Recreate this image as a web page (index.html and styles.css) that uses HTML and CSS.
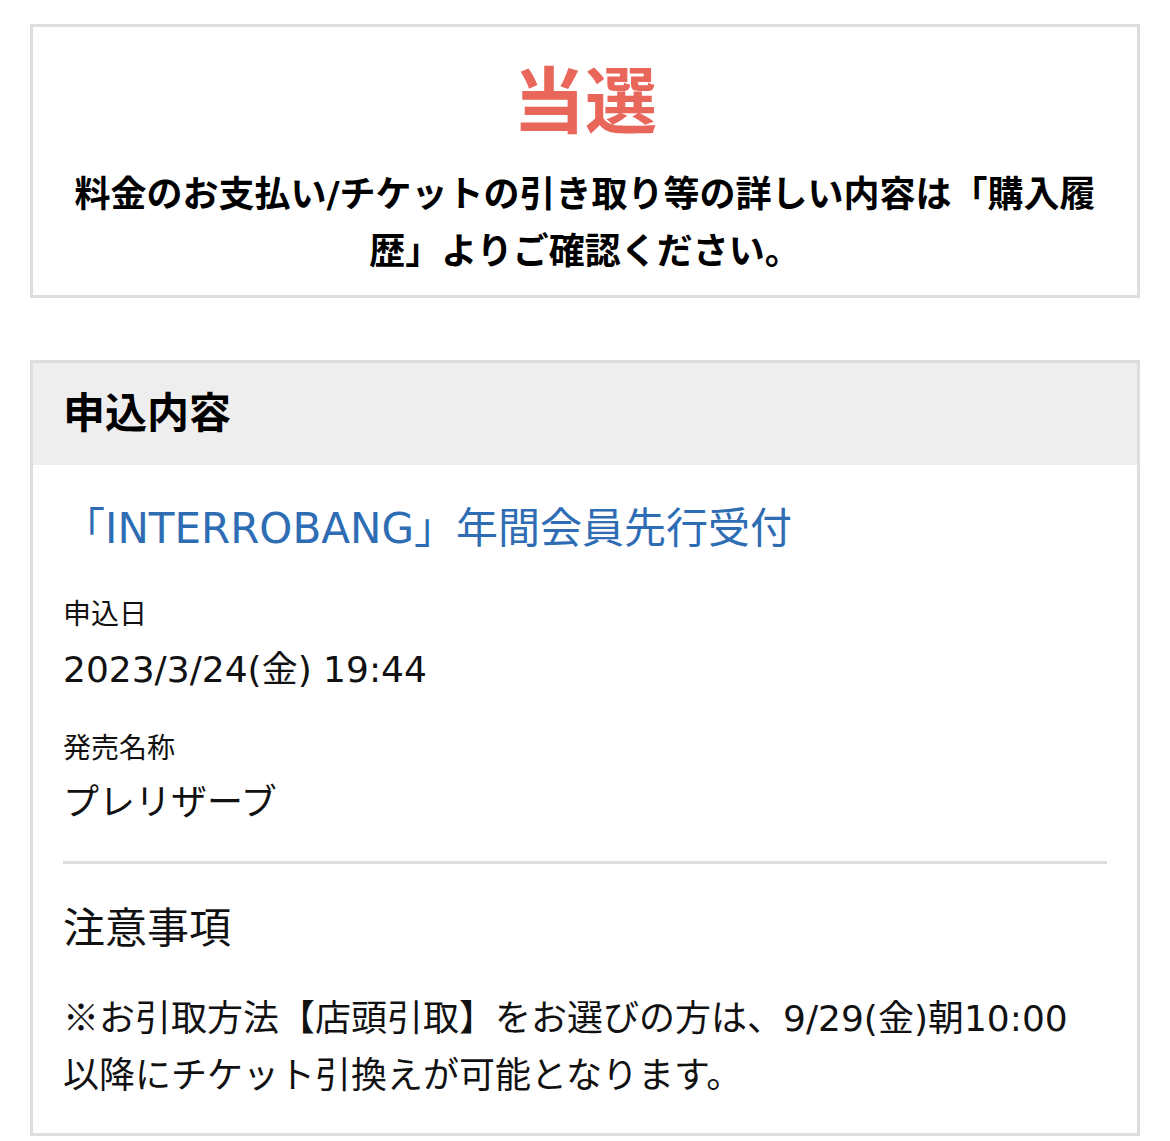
FILE: index.html
```html
<!DOCTYPE html>
<html lang="ja">
<head>
  <meta charset="UTF-8" />
  <meta name="viewport" content="width=device-width, initial-scale=1" />
  <title>申込内容</title>
  <link rel="stylesheet" href="styles.css">
</head>
<body>

  <div class="result-box">
    <h1 class="result-title">当選</h1>
    <p class="result-note">料金のお支払い/チケットの引き取り等の詳しい内容は「購入履歴」よりご確認ください。</p>
  </div>

  <div class="entry-box">
    <div class="entry-header">
      <h2>申込内容</h2>
    </div>

    <div class="entry-body">
      <a class="entry-link" href="#">「INTERROBANG」年間会員先行受付</a>

      <dl class="entry-info">
        <dt>申込日</dt>
        <dd>2023/3/24(金) 19:44</dd>
        <dt>発売名称</dt>
        <dd>プレリザーブ</dd>
      </dl>

      <div class="notice">
        <h3>注意事項</h3>
        <p><span class="kome">※</span>お引取方法【店頭引取】をお選びの方は、9/29(金)朝10:00以降にチケット引換えが可能となります。</p>
      </div>
    </div>
  </div>

</body>
</html>
```

FILE: styles.css
```css
* {
  margin: 0;
  padding: 0;
  box-sizing: border-box;
}

:root {
  --red: #e8665a;
  --blue: #2e6db4;
  --border: #dddddd;
  --header-bg: #eeeeee;
  --text: #111;
}

body {
  background: #fff;
  color: var(--text);
  font-family: "DejaVu Sans", "Noto Sans CJK JP", sans-serif;
  padding: 24px 30px 0;
}

.result-box {
  border: 3px solid var(--border);
  padding: 25px 30px 15px;
  text-align: center;
}

.result-title {
  color: var(--red);
  font-size: 72px;
  line-height: 100px;
  font-weight: 700;
  margin-bottom: 14px;
}

.result-note {
  font-size: 36px;
  line-height: 57px;
  font-weight: 700;
  color: #000;
}

.entry-box {
  margin-top: 62px;
  border: 3px solid var(--border);
}

.entry-header {
  background: var(--header-bg);
  padding: 21px 30px;
}

.entry-header h2 {
  font-size: 42px;
  line-height: 60px;
  font-weight: 700;
  color: #000;
}

.entry-body {
  padding: 34px 30px 29px;
}

.entry-link {
  display: block;
  color: var(--blue);
  text-decoration: none;
  font-size: 42px;
  line-height: 60px;
}

.entry-info {
  margin-top: 35px;
  padding-bottom: 31px;
  border-bottom: 3px solid var(--border);
}

.entry-info dt {
  font-size: 28px;
  line-height: 42px;
  margin-top: 2px;
}

.entry-info dd {
  font-size: 36px;
  line-height: 54px;
  margin-top: 7px;
  margin-bottom: 31px;
}

.entry-info dd:last-child {
  margin-bottom: 0;
  margin-top: 6px;
}

.notice {
  margin-top: 35px;
}

.notice h3 {
  font-size: 42px;
  line-height: 60px;
  font-weight: 400;
}

.notice p {
  margin-top: 31px;
  padding-right: 10px;
  font-size: 36px;
  line-height: 57px;
}

.kome {
  font-family: "Noto Sans CJK JP", sans-serif;
  line-height: 1;
}
```
